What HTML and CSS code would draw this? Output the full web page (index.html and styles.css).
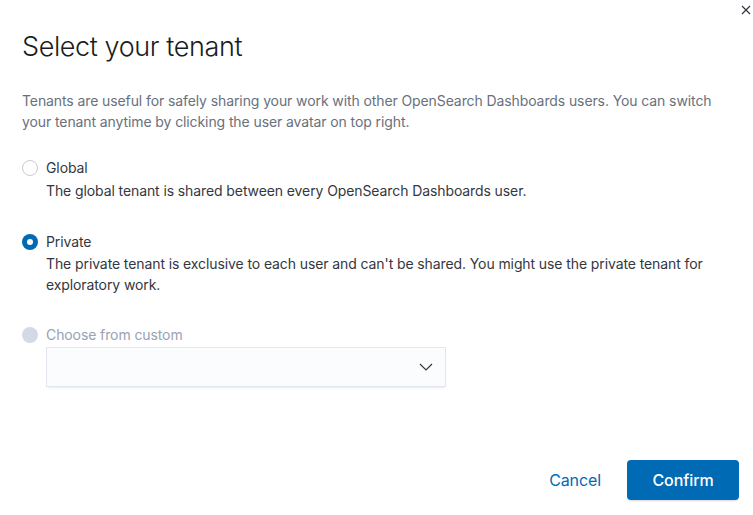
FILE: index.html
```html
<!DOCTYPE html>
<html>
<head>
<meta charset="utf-8">
<link rel="stylesheet" href="styles.css">
</head>
<body>
<div class="modal">
  <button class="close" aria-label="Close">
    <svg width="10" height="10" viewBox="0 0 10 10"><path d="M1 1 L9 9 M9 1 L1 9" stroke="#343741" stroke-width="1.2" fill="none"/></svg>
  </button>
  <h1 class="title">Select your tenant</h1>
  <p class="intro">Tenants are useful for safely sharing your work with other OpenSearch Dashboards users. You can switch your tenant anytime by clicking the user avatar on top right.</p>
  <div class="options">
    <div class="option">
      <div class="row"><span class="radio"></span><span class="label">Global</span></div>
      <p class="desc">The global tenant is shared between every OpenSearch Dashboards user.</p>
    </div>
    <div class="option">
      <div class="row"><span class="radio checked"></span><span class="label">Private</span></div>
      <p class="desc">The private tenant is exclusive to each user and can't be shared. You might use the private tenant for exploratory work.</p>
    </div>
    <div class="option custom">
      <div class="row"><span class="radio disabled"></span><span class="label muted">Choose from custom</span></div>
      <div class="select">
        <svg width="14" height="8" viewBox="0 0 14 8"><path d="M1 1 L7 7 L13 1" stroke="#343741" stroke-width="1.2" fill="none"/></svg>
      </div>
    </div>
  </div>
  <div class="footer">
    <button class="btn-empty">Cancel</button>
    <button class="btn-fill">Confirm</button>
  </div>
</div>
</body>
</html>
```
FILE: styles.css
```css
* { box-sizing: border-box; }
html, body { margin: 0; padding: 0; background: #fff; }
body { font-family: Inter, "Noto Sans", sans-serif; color: #343741; letter-spacing: -0.1px; }
.modal {
  position: relative;
  width: 753px;
  height: 515px;
  padding: 29px 14px 15px 22px;
  display: flex;
  flex-direction: column;
}
.close {
  position: absolute;
  top: 5px;
  right: 2px;
  border: 0;
  background: none;
  padding: 0;
  width: 10px;
  height: 10px;
  display: flex;
}
.title {
  margin: 0;
  font-size: 27px;
  font-weight: 300;
  line-height: 36px;
  letter-spacing: -0.4px;
  color: #1a1c21;
}
.intro {
  margin: 25px 0 0;
  font-size: 14px;
  line-height: 21px;
  color: #69707d;
  max-width: 700px;
}
.options { margin-top: 26px; display: flex; flex-direction: column; gap: 31px; }
.option.custom { margin-top: -1px; }
.row { display: flex; align-items: center; gap: 8px; height: 20px; }
.radio {
  width: 16px; height: 16px; border-radius: 50%;
  border: 1px solid #c9cbcd; background: #fff; flex: none;
}
.radio.checked { border: 0; background: #006bb4; position: relative; }
.radio.checked::after {
  content: ""; position: absolute; left: 5px; top: 5px;
  width: 6px; height: 6px; border-radius: 50%; background: #fff;
}
.radio.disabled { border: 0; background: #d3dae6; }
.label { font-size: 14px; line-height: 20px; color: #343741; }
.label.muted { color: #98a2b3; }
.desc {
  margin: 1.5px 0 0 24px;
  font-size: 14px;
  line-height: 21px;
  color: #343741;
}
.select {
  margin: 2px 0 0 24px;
  width: 400px;
  height: 40px;
  background: #fbfcfd;
  box-shadow: 0 1px 1px -1px rgba(152,162,179,.2), 0 3px 2px -2px rgba(152,162,179,.2), inset 0 0 0 1px rgba(15,39,118,.1);
  display: flex;
  align-items: center;
  justify-content: flex-end;
  padding-right: 13px;
}
.footer {
  margin-top: auto;
  display: flex;
  justify-content: flex-end;
  align-items: center;
  gap: 14px;
}
button { font-family: Inter, "Noto Sans", sans-serif; cursor: pointer; letter-spacing: -0.1px; }
.btn-empty {
  border: 0; background: none; color: #006bb4;
  font-size: 16px; height: 40px; padding: 0 12px;
}
.btn-fill {
  border: 0; background: #006bb4; color: #fff;
  font-size: 16px; font-weight: 500; height: 40px; width: 112px;
  border-radius: 4px;
  box-shadow: 0 2px 2px -1px rgba(0,0,0,.15);
}
```
